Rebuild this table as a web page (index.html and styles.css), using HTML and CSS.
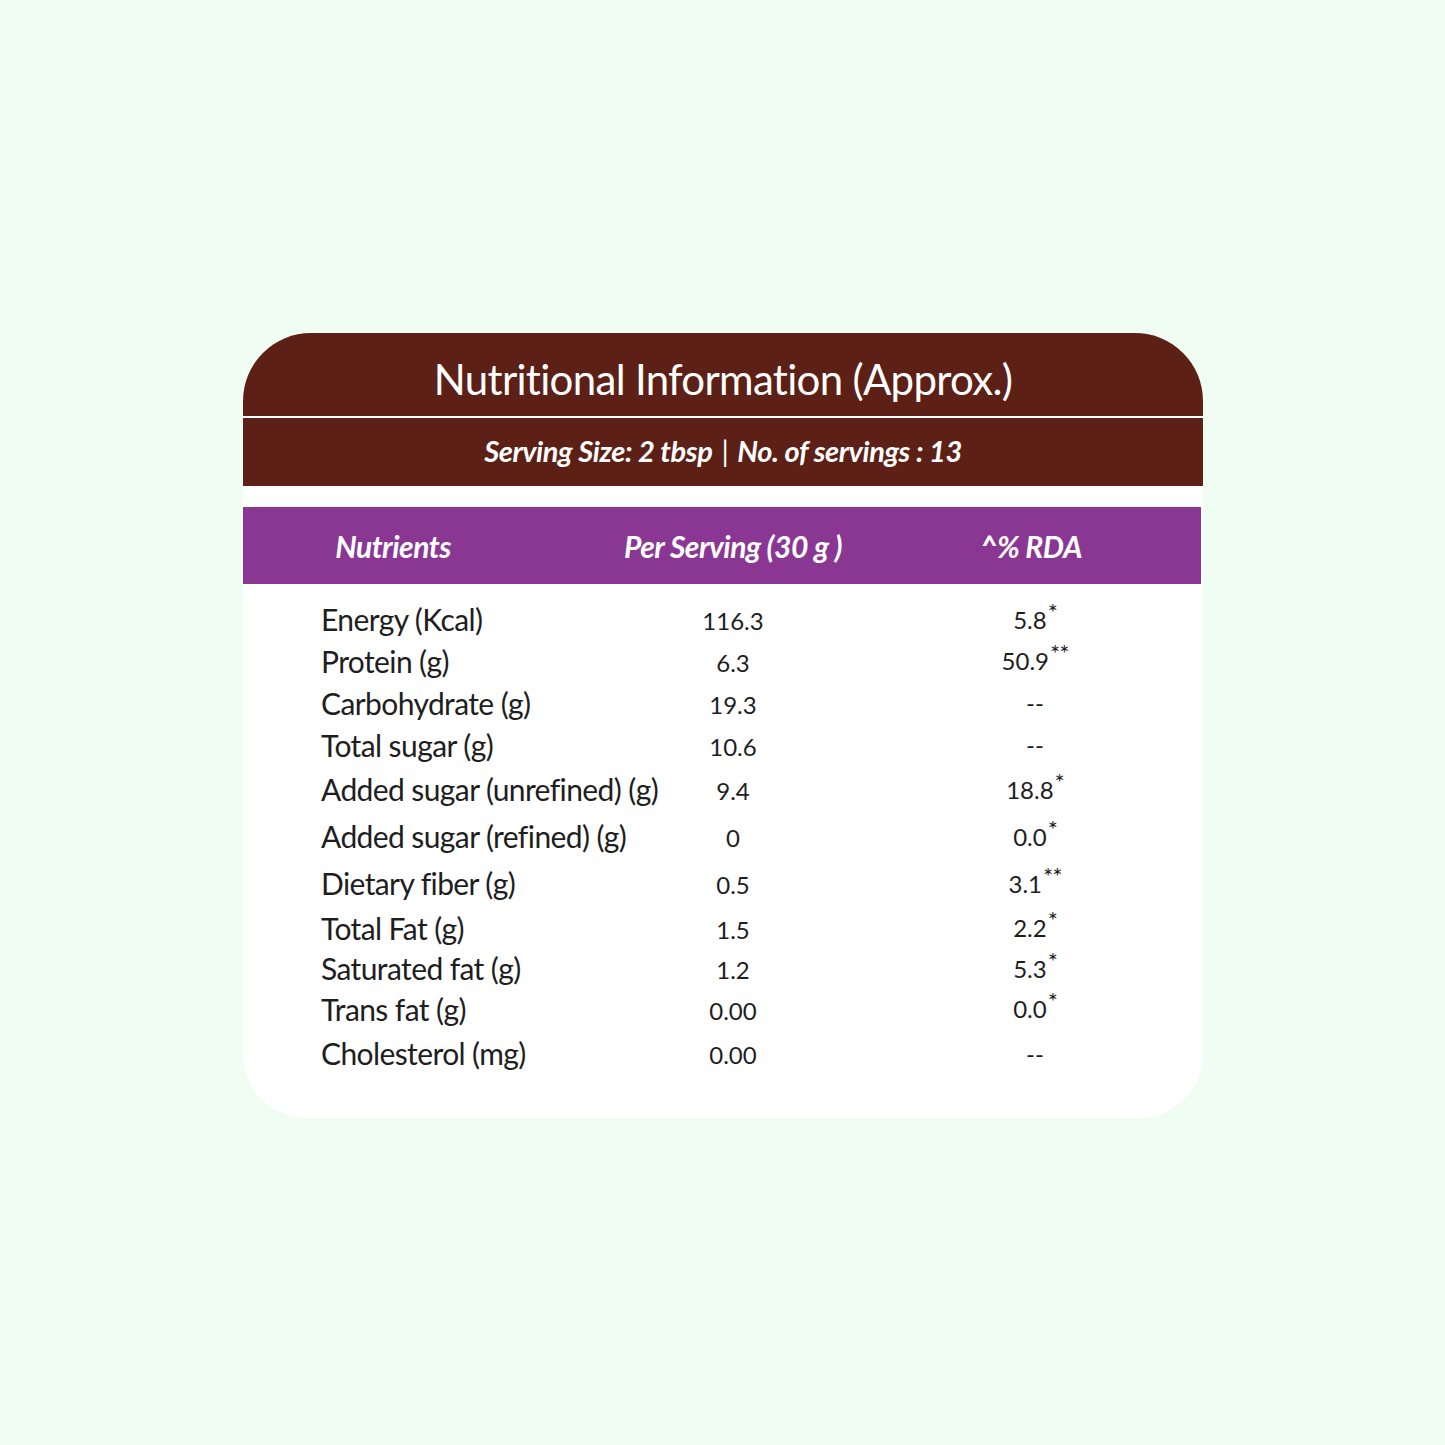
FILE: index.html
```html
<!DOCTYPE html>
<html lang="en">
<head>
<meta charset="utf-8">
<title>Nutritional Information</title>
<link rel="stylesheet" href="styles.css">
</head>
<body>
<div class="page">
  <div class="card">
    <div class="title">Nutritional Information (Approx.)</div>
    <div class="serving">Serving Size: 2 tbsp <span class="bar">|</span> No. of servings : 13</div>
    <div class="head">
      <div>Nutrients</div>
      <div>Per Serving (30 g )</div>
      <div>^% RDA</div>
    </div>
    <div class="rows">
      <div class="n">Energy (Kcal)</div><div class="v">116.3</div><div class="r">5.8<sup>*</sup></div>
      <div class="n">Protein (g)</div><div class="v">6.3</div><div class="r">50.9<sup>**</sup></div>
      <div class="n">Carbohydrate (g)</div><div class="v">19.3</div><div class="r">--</div>
      <div class="n">Total sugar (g)</div><div class="v">10.6</div><div class="r">--</div>
      <div class="n">Added sugar (unrefined) (g)</div><div class="v">9.4</div><div class="r">18.8<sup>*</sup></div>
      <div class="n">Added sugar (refined) (g)</div><div class="v">0</div><div class="r">0.0<sup>*</sup></div>
      <div class="n">Dietary fiber (g)</div><div class="v">0.5</div><div class="r">3.1<sup>**</sup></div>
      <div class="n">Total Fat (g)</div><div class="v">1.5</div><div class="r">2.2<sup>*</sup></div>
      <div class="n">Saturated fat (g)</div><div class="v">1.2</div><div class="r">5.3<sup>*</sup></div>
      <div class="n">Trans fat (g)</div><div class="v">0.00</div><div class="r">0.0<sup>*</sup></div>
      <div class="n">Cholesterol (mg)</div><div class="v">0.00</div><div class="r">--</div>
    </div>
  </div>
</div>
</body>
</html>
```

FILE: styles.css
```css
html, body {
  margin: 0;
  padding: 0;
  background: #effdf3;
}
.page {
  padding: 333px 0 0 243px;
  height: 1112px;
  font-family: Lato, "Open Sans", sans-serif;
}
.card {
  width: 960px;
  background: #ffffff;
  border-radius: 68px 68px 64px 64px;
  overflow: hidden;
  padding-bottom: 42px;
}
.title {
  height: 85px;
  background: #5c2016;
  border-bottom: 2px solid #ffffff;
  color: #ffffff;
  display: flex;
  align-items: center;
  justify-content: center;
  font-size: 42px;
  font-weight: 400;
  letter-spacing: -0.7px;
  padding-top: 8px;
  box-sizing: border-box;
}
.serving {
  height: 68px;
  background: #5c2016;
  color: #ffffff;
  display: flex;
  align-items: center;
  justify-content: center;
  font-size: 29px;
  font-weight: 700;
  font-style: italic;
  letter-spacing: -0.4px;
  padding-bottom: 4px;
  box-sizing: border-box;
}
.serving .bar {
  font-style: normal;
  font-weight: 400;
  margin: 0 9px;
}
.head {
  margin: 21px 2px 0 -2px;
  height: 77px;
  background: #8a3794;
  color: #ffffff;
  display: grid;
  grid-template-columns: 300px 380px 216px;
  align-items: center;
  justify-items: center;
  font-size: 30px;
  font-weight: 700;
  font-style: italic;
  letter-spacing: -0.5px;
  padding-left: 2px;
}
.rows {
  display: grid;
  grid-template-columns: 290px 244px 356px;
  grid-template-rows: 41px 42px 42px 42.5px 46px 48px 46.5px 42px 39px 42.5px 46px;
  align-items: center;
  padding: 14.5px 0 0 78px;
  color: #1e1e1e;
  font-size: 30px;
  letter-spacing: -0.6px;
}
.n {
  white-space: nowrap;
}
.v, .r {
  text-align: center;
  font-size: 24px;
  letter-spacing: 0;
}
.v {
  padding-top: 3px;
}
.r {
  padding-left: 4px;
}
.r sup {
  font-size: 24px;
  font-weight: 400;
  vertical-align: 8px;
  line-height: 0;
  margin-left: 1px;
  letter-spacing: -1px;
}
```
